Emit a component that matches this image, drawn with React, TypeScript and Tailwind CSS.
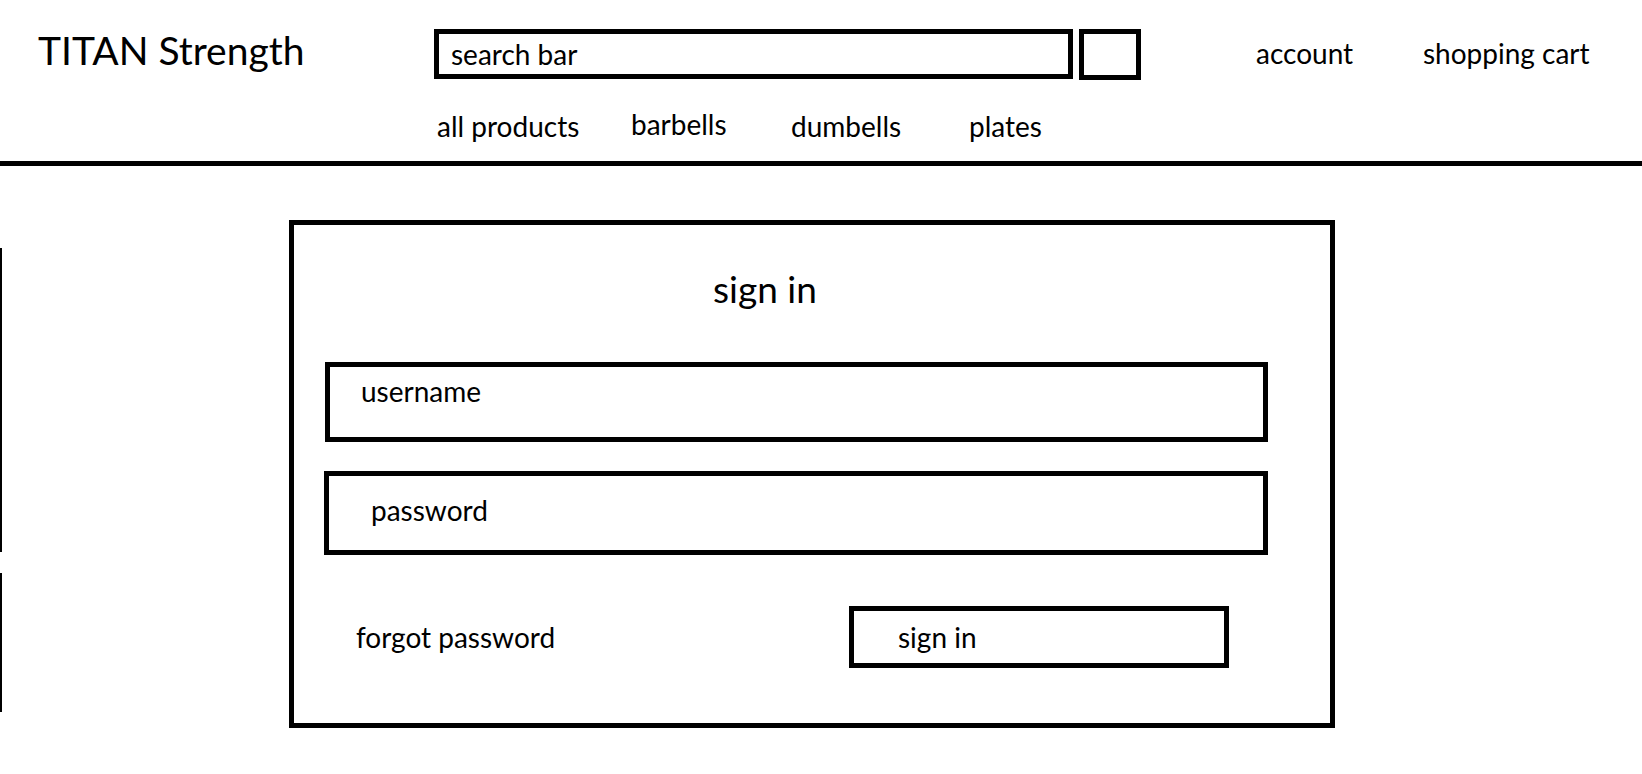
import React from "react";

function NavLink({ label, width }: { label: string; width: string }) {
  return <div className={`${width} text-[28px] leading-[30px] text-black`}>{label}</div>;
}

export default function App() {
  return (
    <div className="min-h-screen w-[1642px] bg-white text-black font-['Lato',sans-serif]">
      {/* top bar */}
      <header className="flex h-[166px] border-b-[5px] border-black">
        <div className="w-[434px] pl-[38px] pt-[28px]">
          <h1 className="text-[39px] leading-[44px] font-normal">TITAN Strength</h1>
        </div>

        <div className="flex w-[707px] flex-col">
          <div className="mt-[29px] flex h-[51px] gap-[6px]">
            <div className="flex h-[50px] w-[639px] items-center border-[5px] border-black pl-[12px] text-[28px]">
              search bar
            </div>
            <button className="h-[51px] w-[62px] border-[5px] border-black" aria-label="search"></button>
          </div>
          <nav className="mt-[31px] flex pl-[3px]">
            <NavLink label="all products" width="w-[194px]" />
            <div className="w-[160px] -mt-[2px] text-[28px] leading-[30px]">barbells</div>
            <NavLink label="dumbells" width="w-[178px]" />
            <NavLink label="plates" width="w-[80px]" />
          </nav>
        </div>

        <div className="ml-[115px] mt-[38px] flex h-[30px] text-[28px] leading-[30px]">
          <a className="w-[167px]">account</a>
          <a>shopping cart</a>
        </div>
      </header>

      <main className="flex pb-[40px]">
        {/* stray guide lines at the left edge */}
        <div className="flex flex-col gap-[21px] pt-[82px]">
          <div className="h-[304px] w-[2px] bg-black"></div>
          <div className="h-[139px] w-[2px] bg-black"></div>
        </div>

        <section className="ml-[287px] mt-[54px] h-[508px] w-[1046px] border-[5px] border-black">
          <h2 className="mt-[44px] pl-[419px] text-[37px] leading-[40px] font-normal">sign in</h2>

          <div className="ml-[31px] mt-[53px] h-[80px] w-[943px] border-[5px] border-black pl-[31px] pt-[9px] text-[28px] leading-[30px]">
            username
          </div>

          <div className="ml-[30px] mt-[29px] h-[84px] w-[944px] border-[5px] border-black pl-[42px] pt-[19px] text-[28px] leading-[30px]">
            password
          </div>

          <div className="mt-[51px] flex items-center">
            <div className="ml-[62px] w-[493px] text-[28px] leading-[30px]">forgot password</div>
            <button className="flex h-[62px] w-[380px] items-center border-[5px] border-black pl-[44px] text-[28px] leading-[30px]">
              sign in
            </button>
          </div>
        </section>
      </main>
    </div>
  );
}
